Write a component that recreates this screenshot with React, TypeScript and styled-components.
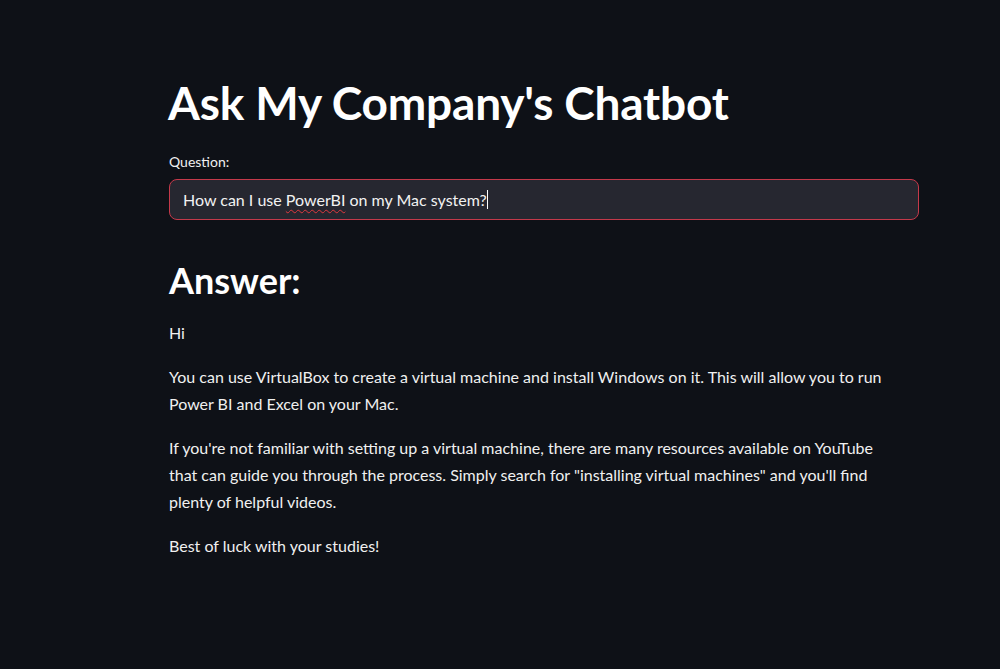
import React from "react";
import styled, { createGlobalStyle } from "styled-components";

const Global = createGlobalStyle`
  html, body { margin: 0; padding: 0; background: #0e1117; }
  body { font-family: Lato, "Noto Sans", sans-serif; color: #fafafa; }
`;

const Page = styled.div`
  min-height: 669px;
  background: #0e1117;
  display: flex;
  justify-content: flex-start;
  padding-left: 169px;
`;

const Main = styled.main`
  width: 750px;
  padding-top: 75px;
  display: flex;
  flex-direction: column;
`;

const Title = styled.h1`
  margin: 0 0 0 -1px;
  font-family: Lato, sans-serif;
  font-weight: 700;
  font-size: 46px;
  line-height: 56px;
  color: #ffffff;
  letter-spacing: -0.2px;
`;

const Label = styled.label`
  margin-top: 22px;
  font-size: 14px;
  line-height: 18px;
  color: #f0f0f0;
`;

const InputBox = styled.div`
  margin-top: 8px;
  height: 41px;
  box-sizing: border-box;
  border: 1px solid #c4394a;
  border-radius: 8px;
  background: #262730;
  display: flex;
  align-items: center;
  padding: 0 13px;
  font-size: 16px;
  color: #f2f2f2;
`;

const Squiggle = styled.span`
  text-decoration: underline wavy #e0383e;
  text-decoration-thickness: 1px;
  text-underline-offset: 3px;
`;

const Caret = styled.span`
  display: inline-block;
  width: 1px;
  height: 19px;
  background: #ffffff;
  vertical-align: middle;
`;

const Heading = styled.h2`
  margin: 38px 0 0 0;
  font-weight: 700;
  font-size: 36px;
  line-height: 44px;
  color: #ffffff;
`;

const Para = styled.p<{ $gap: number }>`
  margin: ${(p) => p.$gap}px 0 0 0;
  max-width: 722px;
  font-size: 16px;
  line-height: 27px;
  color: #f0f0f0;
`;

export default function App() {
  return (
    <Page>
      <Global />
      <Main>
        <Title>Ask My Company's Chatbot</Title>
        <Label>Question:</Label>
        <InputBox>
          <span>
            How can I use <Squiggle>PowerBI</Squiggle> on my Mac system?
          </span>
          <Caret />
        </InputBox>
        <Heading>Answer:</Heading>
        <Para $gap={17}>Hi</Para>
        <Para $gap={17}>
          You can use VirtualBox to create a virtual machine and install Windows on it. This will allow you to run
          Power BI and Excel on your Mac.
        </Para>
        <Para $gap={17}>
          If you're not familiar with setting up a virtual machine, there are many resources available on YouTube
          that can guide you through the process. Simply search for "installing virtual machines" and you'll find
          plenty of helpful videos.
        </Para>
        <Para $gap={17}>Best of luck with your studies!</Para>
      </Main>
    </Page>
  );
}
